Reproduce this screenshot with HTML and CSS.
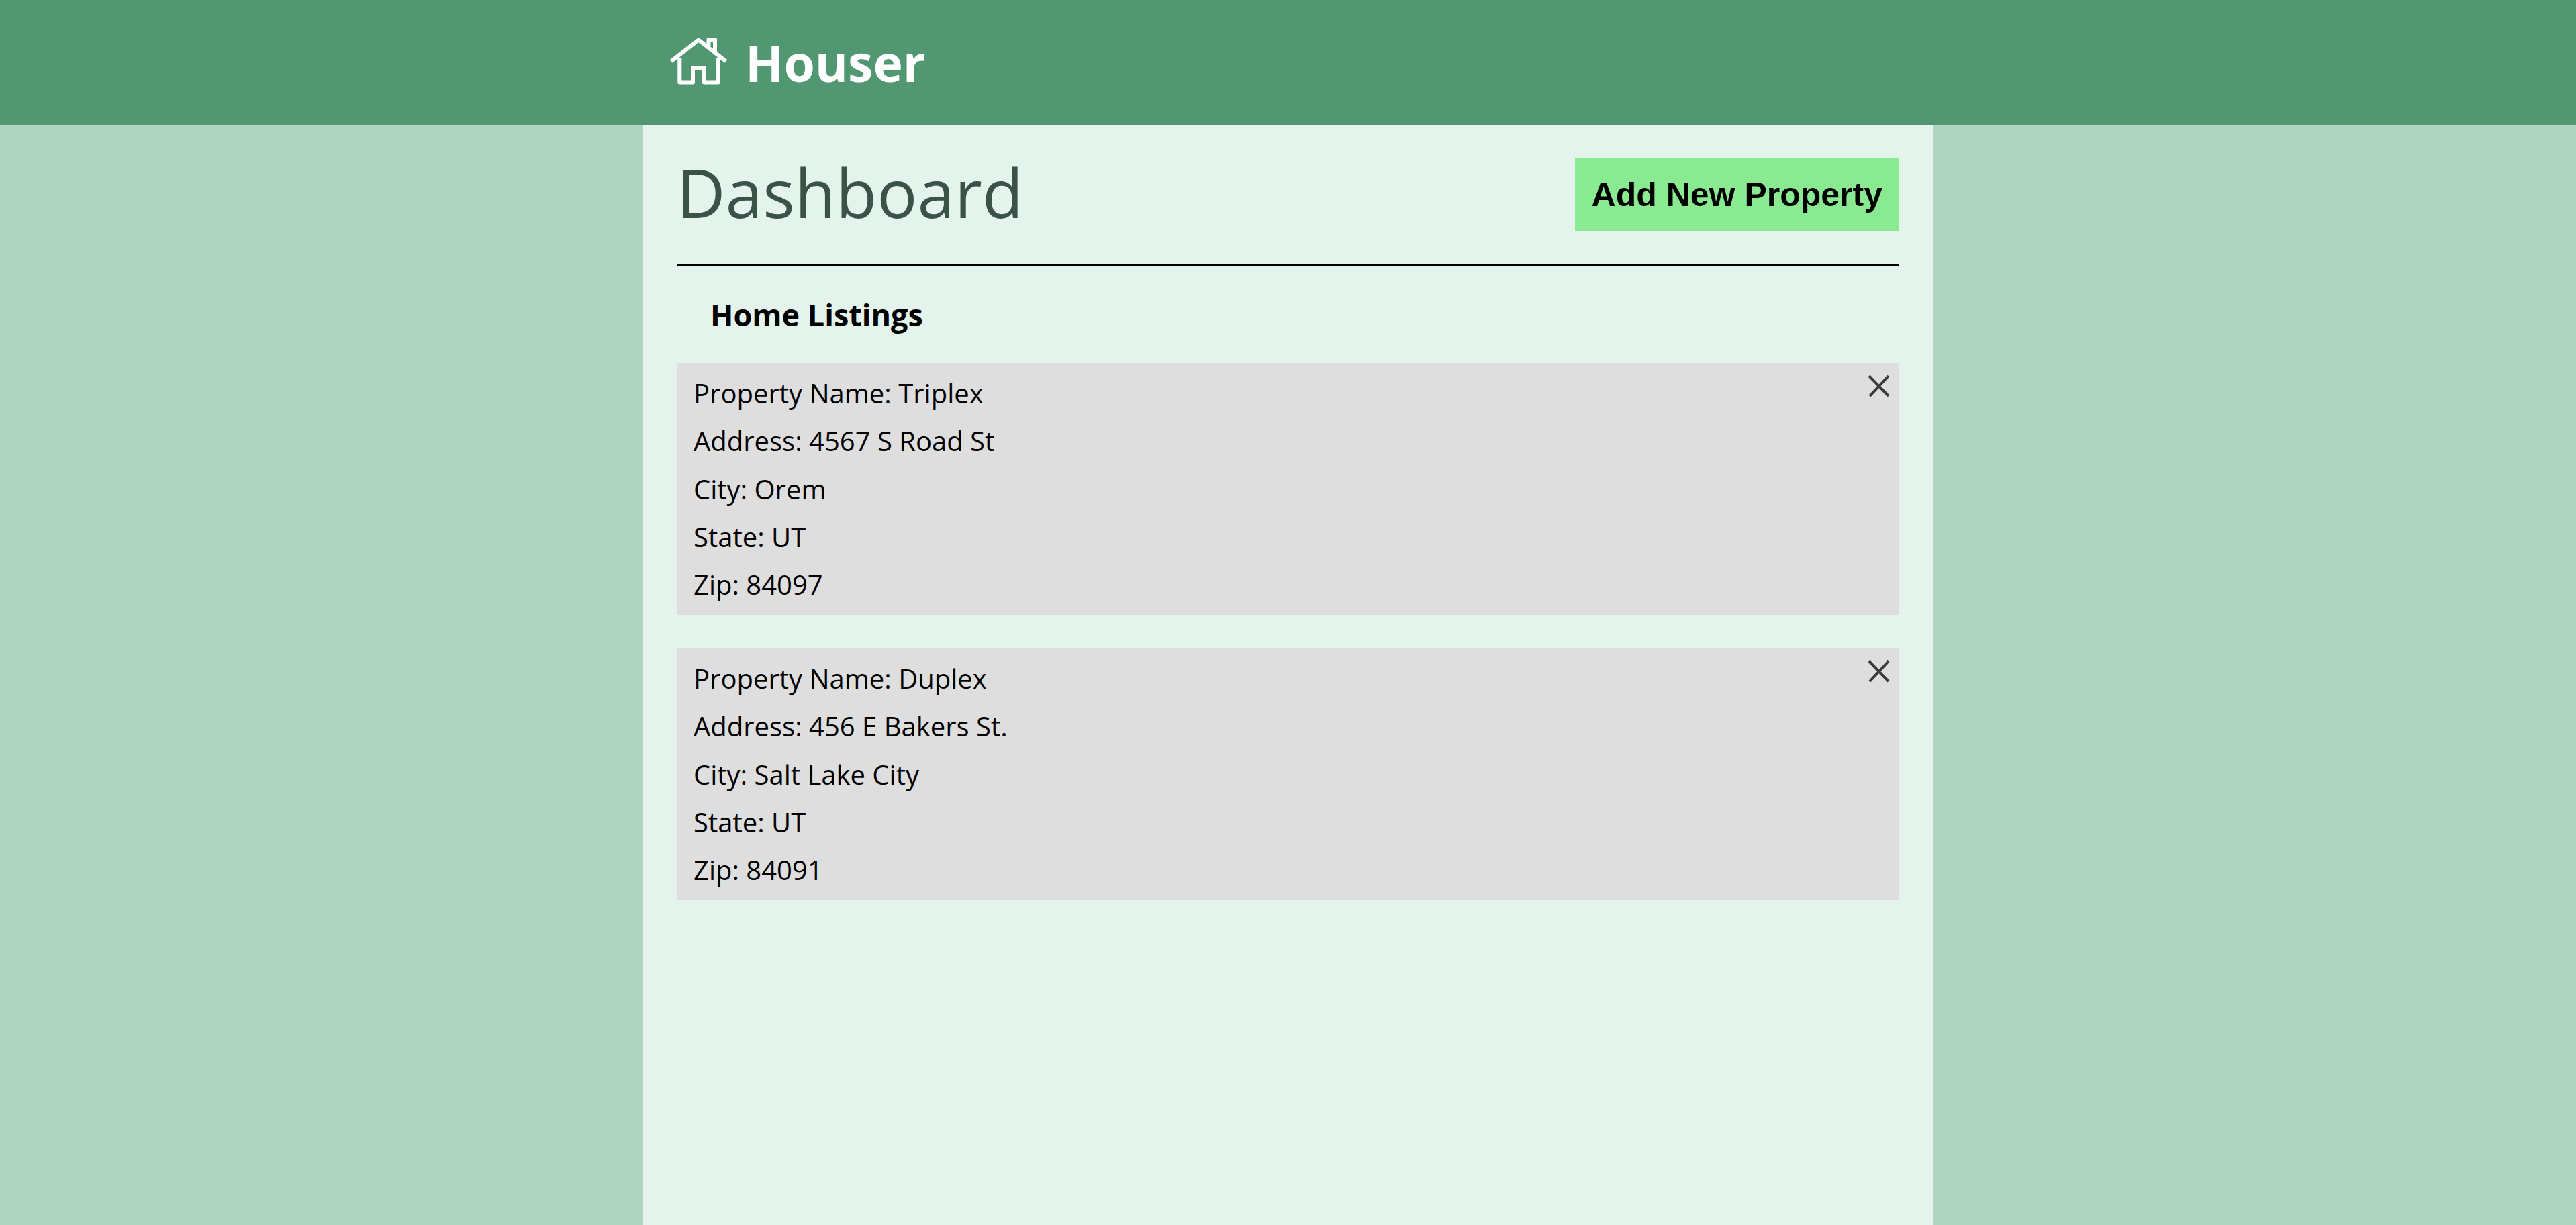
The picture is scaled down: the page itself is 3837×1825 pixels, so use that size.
FILE: index.html
```html
<!DOCTYPE html>
<html lang="en">
<head>
  <meta charset="utf-8">
  <meta name="viewport" content="width=device-width, initial-scale=1">
  <title>Houser</title>
  <link rel="stylesheet" href="styles.css">
</head>
<body>
  <header class="site-header">
    <div class="site-header__inner">
      <svg class="logo" viewBox="0 0 85 70" aria-hidden="true">
        <path d="M1.500 35.500 42.500 3.500 83.500 35.500"/>
        <path d="M57.500 13V3H67V23"/>
        <path d="M14.300 31V66.500H34V45.300H51V66.500H71.500V31"/>
      </svg>
      <h1 class="brand">Houser</h1>
    </div>
  </header>
  <main class="dashboard">
    <div class="dashboard__top">
      <h2 class="dashboard__title">Dashboard</h2>
      <button class="add-button" type="button">Add New Property</button>
    </div>
    <h3 class="dashboard__subtitle">Home Listings</h3>
    <div class="listings">
      <article class="listing">
        <p>Property Name: Triplex</p>
        <p>Address: 4567 S Road St</p>
        <p>City: Orem</p>
        <p>State: UT</p>
        <p>Zip: 84097</p>
        <button class="delete-button" type="button" aria-label="Delete Triplex">
          <svg class="delete-icon" viewBox="0 0 34 34" aria-hidden="true"><path d="M2 2 31 32M31 2 3 32"/></svg>
        </button>
      </article>
      <article class="listing">
        <p>Property Name: Duplex</p>
        <p>Address: 456 E Bakers St.</p>
        <p>City: Salt Lake City</p>
        <p>State: UT</p>
        <p>Zip: 84091</p>
        <button class="delete-button" type="button" aria-label="Delete Duplex">
          <svg class="delete-icon" viewBox="0 0 34 34" aria-hidden="true"><path d="M2 2 31 32M31 2 3 32"/></svg>
        </button>
      </article>
    </div>
  </main>
</body>
</html>
```
FILE: styles.css
```css
* {
  box-sizing: border-box;
  margin: 0;
  padding: 0;
}

body {
  display: flex;
  flex-direction: column;
  min-height: 100vh;
  background: #afd5c1;
  color: #000;
  font-family: "Open Sans", sans-serif;
  font-size: 40px;
  line-height: 1;
}

.site-header {
  background: #519872;
}

.site-header__inner {
  display: flex;
  align-items: flex-start;
  gap: 27px;
  width: 100%;
  max-width: 1921px;
  margin: 0 auto;
  padding: 56px 40px 55px;
}

.logo {
  width: 85px;
  height: 70px;
  fill: none;
  stroke: #fff;
  stroke-width: 6;
  stroke-linejoin: round;
}

.brand {
  color: #fff;
  font-size: 75px;
  font-weight: 700;
}

.dashboard {
  flex: 1;
  width: 100%;
  max-width: 1921px;
  margin: 0 auto;
  padding: 50px;
  background: #e4f3ec;
}

.dashboard__top {
  display: flex;
  justify-content: space-between;
  align-items: flex-start;
  padding-bottom: 50px;
  border-bottom: 3px solid #000;
}

.dashboard__title {
  color: #3b5249;
  font-size: 100px;
  font-weight: 400;
}

.add-button {
  padding: 25px;
  border: 0;
  background: #8aea92;
  color: #000;
  font-family: "Liberation Sans", Arial, sans-serif;
  font-size: 50px;
  font-weight: 700;
  line-height: 58px;
  cursor: pointer;
}

.dashboard__subtitle {
  padding: 50px;
  font-size: 45px;
  font-weight: 700;
  line-height: 44px;
}

.listings {
  display: grid;
  gap: 50px;
}

.listing {
  position: relative;
  display: flex;
  flex-direction: column;
  justify-content: space-between;
  min-height: 375px;
  padding: 25px;
  background: #dedede;
}

.delete-button {
  position: absolute;
  top: 17px;
  right: 13px;
  border: 0;
  background: none;
  cursor: pointer;
}

.delete-icon {
  display: block;
  width: 34px;
  height: 34px;
  fill: none;
  stroke: #3a3a3a;
  stroke-width: 4;
}
```
